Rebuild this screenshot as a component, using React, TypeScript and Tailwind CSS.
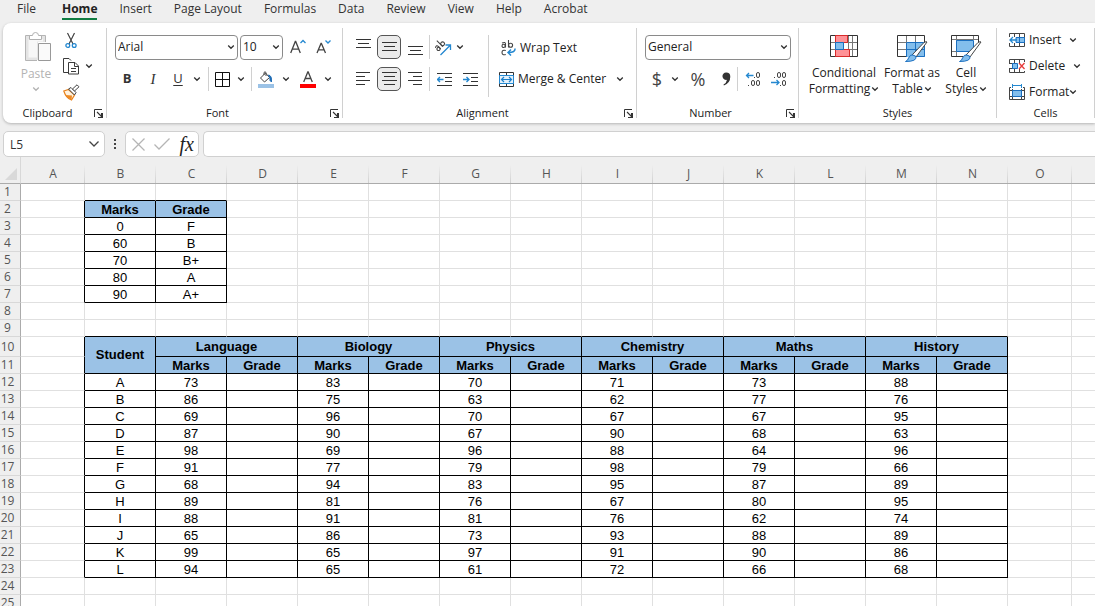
import React from "react";

const UI = "font-['Open_Sans','Noto_Sans',sans-serif]";

/* ---------- data ---------- */

const tabs = ["File", "Home", "Insert", "Page Layout", "Formulas", "Data", "Review", "View", "Help", "Acrobat"];

const letters = ["A", "B", "C", "D", "E", "F", "G", "H", "I", "J", "K", "L", "M", "N", "O"];

const gradeScale: [string, string][] = [
  ["0", "F"],
  ["60", "B"],
  ["70", "B+"],
  ["80", "A"],
  ["90", "A+"],
];

const subjects = ["Language", "Biology", "Physics", "Chemistry", "Maths", "History"];

const students: [string, number[]][] = [
  ["A", [73, 83, 70, 71, 73, 88]],
  ["B", [86, 75, 63, 62, 77, 76]],
  ["C", [69, 96, 70, 67, 67, 95]],
  ["D", [87, 90, 67, 90, 68, 63]],
  ["E", [98, 69, 96, 88, 64, 96]],
  ["F", [91, 77, 79, 98, 79, 66]],
  ["G", [68, 94, 83, 95, 87, 89]],
  ["H", [89, 81, 76, 67, 80, 95]],
  ["I", [88, 91, 81, 76, 62, 74]],
  ["J", [65, 86, 73, 93, 88, 89]],
  ["K", [99, 65, 97, 91, 90, 86]],
  ["L", [94, 65, 61, 72, 66, 68]],
];

/* ---------- icons ---------- */

function Chevron({ className = "text-[#333]" }: { className?: string }) {
  return (
    <svg width="8" height="6" viewBox="0 0 8 6" className={`shrink-0 ${className}`} aria-hidden="true">
      <path d="M1.200 1.500 4 4.300l2.800-2.800" fill="none" stroke="currentColor" strokeWidth="1.300" />
    </svg>
  );
}

function PasteIcon() {
  return (
    <svg width="28" height="31" viewBox="0 0 28 31" fill="none" aria-hidden="true">
      <path d="M7 4.500H1.500v25H13" stroke="#b4b4b4" />
      <path d="M2 5h19v6h-7v18H2z" fill="#e4e4e4" />
      <path d="M4.500 8v18.500H13V10.500h6V8z" fill="#f7f7f7" />
      <path d="M15 4.500h6.500V11" stroke="#b4b4b4" />
      <path d="M5.500 8.500v-4h3a3 3 0 0 1 6 0h3v4z" fill="#fff" stroke="#b0b0b0" />
      <path d="M14.500 12.500h12v17h-12z" fill="#fafafa" stroke="#999" />
    </svg>
  );
}

function CutIcon() {
  return (
    <svg width="12" height="17" viewBox="0 0 12 17" fill="none" aria-hidden="true">
      <path d="M2.500 1 8 12M9.500 1 4 12" stroke="#444" strokeWidth="1.200" />
      <circle cx="2.800" cy="13.500" r="1.900" stroke="#2488d0" strokeWidth="1.300" />
      <circle cx="9.200" cy="13.500" r="1.900" stroke="#2488d0" strokeWidth="1.300" />
    </svg>
  );
}

function CopyIcon() {
  return (
    <svg width="17" height="17" viewBox="0 0 17 17" fill="none" stroke="#3b3b3b" aria-hidden="true">
      <path d="M5 14.500H.500V.500h5.500l2 2" />
      <path d="M5.500 4.500h6.500l3.500 3.500v8h-10z" fill="#fff" />
      <path d="M11.500 4.500v4h4M8 10.500h5M8 13.500h5" />
    </svg>
  );
}

function PainterIcon() {
  return (
    <svg width="17" height="17" viewBox="0 0 17 17" fill="none" aria-hidden="true">
      <path d="M.800 7 5.500 5.500l6 5.500-3 5Q3 14 .800 7z" fill="#fff3e0" stroke="#e8811a" strokeWidth="1.200" />
      <path d="M2.500 11 9 11.500 8.500 16Q5 15 2.500 11z" fill="#ed8a25" />
      <path d="m5.500 5 2.500-1.500 5 5-1.500 2.500z" fill="#fff" stroke="#444" />
      <path d="m9.500 5 4.500-4.200L16 2.800 11.500 7z" fill="#fff" stroke="#444" />
    </svg>
  );
}

function LauncherIcon() {
  return (
    <svg width="9" height="9" viewBox="0 0 9 9" fill="none" stroke="#333" aria-hidden="true">
      <path d="M8 .500H.500V8" />
      <path d="m3 3 4.500 4.500M7.500 4v4M4 8.500h4.500V4" strokeWidth="1.100" />
    </svg>
  );
}

function GrowFontIcon({ shrink = false }: { shrink?: boolean }) {
  return (
    <svg width="16" height="16" viewBox="0 0 16 16" fill="none" aria-hidden="true">
      <path
        d={shrink ? "M1 14 5 4.500h.400L9.500 14M2.500 10.800h5.600" : "M.700 14 5.300 2.500h.400L10.300 14M2.300 10.200h6.500"}
        stroke="#444"
        strokeWidth="1.300"
      />
      <path d={shrink ? "m9.500 1.500 2.500 2.500 2.500-2.500" : "m10.500 4 2.500-2.500L15.500 4"} stroke="#2488d0" strokeWidth="1.300" />
    </svg>
  );
}

function BordersIcon() {
  return (
    <svg width="15" height="15" viewBox="0 0 15 15" fill="none" stroke="#111" aria-hidden="true">
      <path d="M.500.500h14v14H.500zM7.500 0v15M0 7.500h15" />
    </svg>
  );
}

function FillIcon() {
  return (
    <svg width="16" height="17" viewBox="0 0 16 17" fill="none" aria-hidden="true">
      <path d="m2.500 7 5-5 4 4.500-5 4.500z" fill="#fff" stroke="#444" />
      <path d="M6 4V1.500q1-1.500 2 0V5" stroke="#444" />
      <path d="M10.500 4q3.500.500 3 7L12 9.500Q12.500 7 10.500 4z" fill="#1f6cb5" stroke="#1f6cb5" />
      <path d="M0 13h16v4H0z" fill="#9bc2e6" />
    </svg>
  );
}

function FontColorIcon() {
  return (
    <svg width="16" height="17" viewBox="0 0 16 17" fill="none" aria-hidden="true">
      <path d="M3.700 11 7.800 1h.400L12.300 11M5.300 7.500h5.500" stroke="#444" strokeWidth="1.300" />
      <path d="M0 13h16v4H0z" fill="#f00" />
    </svg>
  );
}

const lineSets = {
  top: "M0 .500h15M2 4.500h11M0 8.500h15",
  middle: "M0 3.500h15M2 7.500h11M0 11.500h15",
  bottom: "M0 7.500h15M2 11.500h11M0 15.500h15",
  left: "M0 1.500h14M0 5.500h9M0 9.500h14M0 13.500h9",
  center: "M0 1.500h15M2 5.500h11M0 9.500h15M2 13.500h11",
  right: "M0 1.500h14M5 5.500h9M0 9.500h14M5 13.500h9",
};

function LinesIcon({ kind }: { kind: keyof typeof lineSets }) {
  return (
    <svg width="15" height="16" viewBox="0 0 15 16" fill="none" stroke="#333" aria-hidden="true">
      <path d={lineSets[kind]} />
    </svg>
  );
}

function OrientationIcon() {
  return (
    <svg width="17" height="17" viewBox="0 0 17 17" fill="none" aria-hidden="true">
      <g transform="rotate(-45 5 7)" stroke="#444" strokeWidth="1.100">
        <path d="M.500 5q3-1.500 3 1v3.500" />
        <circle cx="1.900" cy="8" r="1.600" />
        <path d="M6.500 1v8.500" />
        <circle cx="8.400" cy="7.300" r="1.900" />
      </g>
      <path d="M5.500 16 15 6.500M10.500 6H15.500V11" stroke="#2488d0" strokeWidth="1.300" />
    </svg>
  );
}

function IndentIcon({ increase = false }: { increase?: boolean }) {
  return (
    <svg width="15" height="15" viewBox="0 0 15 15" fill="none" aria-hidden="true">
      <path d="M0 1.500h15M8 5.500h7M8 9.500h7M0 13.500h15" stroke="#333" />
      <path d={increase ? "M0 7.500h6M3.500 5 6 7.500 3.500 10" : "M6.500 7.500h-6M3 5 .500 7.500 3 10"} stroke="#2488d0" strokeWidth="1.400" />
    </svg>
  );
}

function WrapIcon() {
  return (
    <svg width="15" height="16" viewBox="0 0 15 16" fill="none" aria-hidden="true">
      <g stroke="#444" strokeWidth="1.100">
        <path d="M1 3q3.500-1.500 3.500 1v3.500" />
        <circle cx="2.600" cy="5.900" r="1.600" />
        <path d="M7.500 0v7.500" />
        <circle cx="9.600" cy="5.200" r="2" />
        <path d="M4.800 10.500q-3.800-1-3.800 2t3.800 2" />
      </g>
      <path d="M14 8.500q.500 4-6.500 4M10 9.500l-3 3 3 3" stroke="#2488d0" strokeWidth="1.500" />
    </svg>
  );
}

function MergeIcon() {
  return (
    <svg width="15" height="15" viewBox="0 0 15 15" fill="none" aria-hidden="true">
      <path d="M.500.500h14v14H.500zM7.500 0v3M7.500 12v3" stroke="#333" />
      <path d="M.500 3.500h14v8H.500z" fill="#e4f1fb" stroke="#2488d0" />
      <path d="M2.500 7.500h10M5 5 2.500 7.500 5 10M10 5l2.500 2.500L10 10" stroke="#1b7fca" strokeWidth="1.200" />
    </svg>
  );
}

function DecimalIcon({ decrease = false }: { decrease?: boolean }) {
  return (
    <svg width="17" height="17" viewBox="0 0 17 17" fill="none" aria-hidden="true">
      {decrease ? (
        <g stroke="#444">
          <rect x="6.500" y="1.500" width="3" height="5" rx="1.500" />
          <rect x="11.500" y="1.500" width="3" height="5" rx="1.500" />
          <rect x="11.500" y="9.500" width="3" height="5" rx="1.500" />
          <path d="M3.500 6v1M9.500 14v1" />
        </g>
      ) : (
        <g stroke="#444">
          <rect x="11.500" y="1.500" width="3" height="5" rx="1.500" />
          <rect x="6.500" y="9.500" width="3" height="5" rx="1.500" />
          <rect x="11.500" y="9.500" width="3" height="5" rx="1.500" />
          <path d="M9.500 6v1M3.500 14v1" />
        </g>
      )}
      <path
        d={decrease ? "M0 11.500h8M5.500 9 8 11.500 5.500 14" : "M8.500 4.500h-7M4 2 1.500 4.500 4 7"}
        stroke="#2488d0"
        strokeWidth="1.300"
      />
    </svg>
  );
}

function ConditionalIcon() {
  return (
    <svg width="28" height="22" viewBox="0 0 28 22" fill="none" aria-hidden="true">
      <path d="M0 7.500h28M0 14.500h28M5.500 0v22M18.500 0v22M22.500 0v22" stroke="#777" />
      <path d="M.500.500h27v21H.500z" stroke="#333" />
      <path d="M5.500.500h12v7h-12zM5.500 14.500h14v7h-14z" fill="#ff9297" stroke="#d92b2b" />
      <path d="M5.500 7.500h8v7h-8z" fill="#83beec" stroke="#1b6fc0" />
    </svg>
  );
}

function Brush() {
  return (
    <>
      <path d="m30 7-11 15-4-2L27 7.500q3-1.500 3-.500z" fill="#fff" stroke="#444" />
      <path d="M19 21.500q1 5-10.500 5 2.500-1 3-3.500 2-4 4.500-3z" fill="#83beec" stroke="#1b6fc0" />
    </>
  );
}

function FormatTableIcon() {
  return (
    <svg width="31" height="28" viewBox="0 0 31 28" fill="none" aria-hidden="true">
      <path d="M10 8h18v14H10z" fill="#83beec" />
      <path d="M0 7.500h28M0 14.500h10M9.500 0v22M18.500 0v8" stroke="#777" />
      <path d="M10 21.500H.500V.500h27V8" stroke="#333" />
      <path d="M9.500 7.500h18v14h-8M9.500 14.500h18M18.500 8v14M9.500 8v14" stroke="#1b6fc0" />
      <Brush />
    </svg>
  );
}

function CellStylesIcon() {
  return (
    <svg width="31" height="28" viewBox="0 0 31 28" fill="none" aria-hidden="true">
      <path d="M0 4.500h28M0 16.500h6M5.500 0v22M22.500 0v5" stroke="#777" />
      <path d="M12 21.500H.500V.500h27V8" stroke="#333" />
      <path d="M5.500 5.500h17v11h-17z" fill="#83beec" stroke="#1b6fc0" />
      <Brush />
    </svg>
  );
}

function InsertCellsIcon() {
  return (
    <svg width="16" height="14" viewBox="0 0 16 14" fill="none" aria-hidden="true">
      <path d="M.500 4V.500h15v13H.500V10M5.500 0v4M10.500 0v4M5.500 10v4M10.500 10v4" stroke="#444" />
      <path d="M7 4.500h8.500v5H7z" fill="#83beec" stroke="#1b6fc0" />
      <path d="M10.500 4v6" stroke="#1b6fc0" />
      <path d="M8 7H1M4 4 1 7l3 3" stroke="#2488d0" strokeWidth="1.300" />
    </svg>
  );
}

function DeleteCellsIcon() {
  return (
    <svg width="16" height="14" viewBox="0 0 16 14" fill="none" aria-hidden="true">
      <path d="M.500 4V.500h15V3M.500 10v3.500h15V12M5.500 0v4M10.500 0v4M5.500 10v4M10.500 10v4M0 4.500h4M0 9.500h4" stroke="#444" />
      <path d="M3.500 4.500h5v5h-5z" fill="#83beec" stroke="#1b6fc0" />
      <path d="m10 4 5.500 6M15.500 4 10 10" stroke="#e83b3b" strokeWidth="1.300" />
    </svg>
  );
}

function FormatCellsIcon() {
  return (
    <svg width="16" height="17" viewBox="0 0 16 17" fill="none" aria-hidden="true">
      <path d="M3.500 0v4M12.500 0v4M3.500 1.500h9" stroke="#2488d0" />
      <path d="M2 3.500H.500v12h15v-12H14M3.500 5v11M12.500 5v11M0 6.500h16M0 12.500h16" stroke="#444" />
      <path d="M3.500 6.500h9v6h-9z" fill="#83beec" stroke="#1b6fc0" />
    </svg>
  );
}

/* ---------- ribbon parts ---------- */

type ButtonProps = { label: string; width?: string; active?: boolean; children: React.ReactNode };

function Tool({ label, width = "w-6", active = false, children }: ButtonProps) {
  return (
    <button
      type="button"
      aria-label={label}
      className={`flex h-6 shrink-0 items-center justify-center rounded-[5px] ${width} ${
        active ? "border border-[#555] bg-[#ebebeb]" : ""
      }`}
    >
      {children}
    </button>
  );
}

function Drop({ label, width = "w-4" }: { label: string; width?: string }) {
  return (
    <Tool label={label} width={width}>
      <Chevron />
    </Tool>
  );
}

function Divider({ height = "h-6" }: { height?: string }) {
  return <span className={`w-px shrink-0 bg-[#d0d0d0] ${height}`} />;
}

function Picker({ label, value, width }: { label: string; value: string; width: string }) {
  return (
    <label className={`relative flex h-[25px] shrink-0 items-center ${width}`}>
      <select
        aria-label={label}
        defaultValue={value}
        className="h-full w-full appearance-none rounded-[4px] border border-[#8a8a8a] bg-white pl-[2px] text-xs text-[#222]"
      >
        <option>{value}</option>
      </select>
      <span className="pointer-events-none absolute right-[3px]">
        <Chevron />
      </span>
    </label>
  );
}

type GroupProps = { name: string; width: string; launcher?: boolean; children: React.ReactNode };

function Group({ name, width, launcher = true, children }: GroupProps) {
  return (
    <section aria-label={name} className={`flex h-full shrink-0 items-center ${width}`}>
      <div className="flex h-full min-w-0 flex-1 flex-col justify-between pb-[2px]">
        {children}
        <div className="flex items-center">
          <span className="flex-1 text-center text-[11px] leading-4">{name}</span>
          {launcher && (
            <button type="button" aria-label={`${name} settings`} className="mr-[2px] flex w-3 shrink-0 justify-center">
              <LauncherIcon />
            </button>
          )}
        </div>
      </div>
      <Divider height="h-[90px]" />
    </section>
  );
}

function BigButton({ lines, width, children }: { lines: [string, string]; width: string; children: React.ReactNode }) {
  return (
    <button type="button" className={`flex shrink-0 flex-col items-center text-xs leading-4 ${width}`}>
      <span className="flex h-[30px] items-start">{children}</span>
      <span>{lines[0]}</span>
      <span className="flex items-center gap-px">
        {lines[1]}
        <Chevron />
      </span>
    </button>
  );
}

function CellsButton({ label, gap, children }: { label: string; gap: string; children: React.ReactNode }) {
  return (
    <button type="button" className={`flex h-[18px] items-center text-xs leading-4 ${gap}`}>
      <span className="flex items-center gap-1">
        {children}
        {label}
      </span>
      <Chevron />
    </button>
  );
}

function Ribbon() {
  return (
    <div className="ml-[3px] flex h-[100px] shrink-0 overflow-hidden rounded-l-lg bg-white shadow-[0_1px_3px_rgba(0,0,0,0.25)]">
      <Group name="Clipboard" width="w-[104px]">
        <div className="flex pt-2 pl-2">
          <button type="button" className="flex w-[50px] flex-col items-center text-xs leading-4 text-[#b3b3b3]">
            <span className="pl-1">
              <PasteIcon />
            </span>
            <span className="pt-1">Paste</span>
            <Chevron className="mt-1 text-[#b3b3b3]" />
          </button>
          <div className="flex flex-col gap-2">
            <button type="button" aria-label="Cut" className="flex h-[18px] w-5 items-center justify-center">
              <CutIcon />
            </button>
            <div className="flex">
              <button type="button" aria-label="Copy" className="flex h-[18px] w-5 items-center justify-center">
                <CopyIcon />
              </button>
              <button type="button" aria-label="Copy options" className="flex h-[18px] w-4 items-center justify-center">
                <Chevron />
              </button>
            </div>
            <button type="button" aria-label="Format painter" className="flex h-[18px] w-5 items-center justify-center">
              <PainterIcon />
            </button>
          </div>
        </div>
      </Group>

      <Group name="Font" width="w-[236px]">
        <div className="flex flex-col gap-2 pt-3 pl-2">
          <div className="flex h-6 items-center">
            <Picker label="Font" value="Arial" width="w-[123px]" />
            <span className="w-[2px]" />
            <Picker label="Font size" value="10" width="w-[43px]" />
            <span className="w-[2px]" />
            <Tool label="Increase font size" width="w-[26px]">
              <GrowFontIcon />
            </Tool>
            <Tool label="Decrease font size" width="w-[26px]">
              <GrowFontIcon shrink />
            </Tool>
          </div>
          <div className="flex h-6 items-center text-[13px] text-[#333]">
            <Tool label="Bold">
              <b>B</b>
            </Tool>
            <Tool label="Italic" width="w-7">
              <i className="font-['Liberation_Serif',serif] text-[15px]">I</i>
            </Tool>
            <Tool label="Underline" width="w-[22px]">
              <span className="underline underline-offset-2">U</span>
            </Tool>
            <Drop label="Underline options" />
            <span className="w-[3px]" />
            <Divider />
            <Tool label="Borders" width="w-[26px]">
              <BordersIcon />
            </Tool>
            <Drop label="Border options" width="w-3" />
            <span className="w-1" />
            <Divider />
            <Tool label="Fill color" width="w-7">
              <FillIcon />
            </Tool>
            <Drop label="Fill color options" width="w-3" />
            <Tool label="Font color" width="w-8">
              <FontColorIcon />
            </Tool>
            <Drop label="Font color options" width="w-2" />
          </div>
        </div>
      </Group>

      <Group name="Alignment" width="w-[294px]">
        <div className="flex pt-3 pl-2">
          <div className="flex w-[137px] flex-col gap-2">
            <div className="flex h-6 items-center gap-[2px]">
              <Tool label="Top align">
                <LinesIcon kind="top" />
              </Tool>
              <Tool label="Middle align" active>
                <LinesIcon kind="middle" />
              </Tool>
              <Tool label="Bottom align">
                <LinesIcon kind="bottom" />
              </Tool>
              <Divider />
              <Tool label="Orientation" width="w-[22px]">
                <OrientationIcon />
              </Tool>
              <Drop label="Orientation options" width="w-2" />
            </div>
            <div className="flex h-6 items-center gap-[2px]">
              <Tool label="Align left">
                <LinesIcon kind="left" />
              </Tool>
              <Tool label="Center" active>
                <LinesIcon kind="center" />
              </Tool>
              <Tool label="Align right">
                <LinesIcon kind="right" />
              </Tool>
              <Divider />
              <Tool label="Decrease indent">
                <IndentIcon />
              </Tool>
              <Tool label="Increase indent">
                <IndentIcon increase />
              </Tool>
            </div>
          </div>
          <Divider height="h-[62px]" />
          <div className="flex flex-col gap-2 pl-[10px] text-xs">
            <button type="button" className="flex h-6 items-center gap-1 pt-[2px] pl-[2px]">
              <WrapIcon />
              Wrap Text
            </button>
            <div className="flex h-6 items-center gap-1">
              <button type="button" className="flex items-center gap-1">
                <MergeIcon />
                Merge &amp; Center
              </button>
              <Drop label="Merge options" width="w-5" />
            </div>
          </div>
        </div>
      </Group>

      <Group name="Number" width="w-[162px]">
        <div className="flex flex-col gap-2 pt-3 pl-2">
          <div className="flex h-6 items-center">
            <Picker label="Number format" value="General" width="w-[146px]" />
          </div>
          <div className="flex h-6 items-center text-lg text-[#444]">
            <Tool label="Currency">
              <span>$</span>
            </Tool>
            <Drop label="Currency options" width="w-3" />
            <Tool label="Percent" width="w-[34px]">
              <span>%</span>
            </Tool>
            <Tool label="Comma style" width="w-[22px]">
              <svg width="9" height="14" viewBox="0 0 9 14" aria-hidden="true">
                <path d="M4.200.500A3.700 3.700 0 1 0 5 7.800Q4.500 11 1.500 12.500l.400 1Q8.300 11 8.300 4.700 8.300.500 4.200.500z" fill="#333" />
              </svg>
            </Tool>
            <Divider />
            <Tool label="Increase decimal" width="w-[30px]">
              <DecimalIcon />
            </Tool>
            <Tool label="Decrease decimal" width="w-[22px]">
              <DecimalIcon decrease />
            </Tool>
          </div>
        </div>
      </Group>

      <Group name="Styles" width="w-[198px]" launcher={false}>
        <div className="flex pt-3 pl-2">
          <BigButton lines={["Conditional", "Formatting"]} width="w-[74px]">
            <ConditionalIcon />
          </BigButton>
          <BigButton lines={["Format as", "Table"]} width="w-[62px]">
            <FormatTableIcon />
          </BigButton>
          <BigButton lines={["Cell", "Styles"]} width="w-[46px]">
            <CellStylesIcon />
          </BigButton>
        </div>
      </Group>

      <Group name="Cells" width="w-[98px]" launcher={false}>
        <div className="flex flex-col items-start gap-2 pt-2 pl-3">
          <CellsButton label="Insert" gap="gap-2">
            <InsertCellsIcon />
          </CellsButton>
          <CellsButton label="Delete" gap="gap-2">
            <DeleteCellsIcon />
          </CellsButton>
          <CellsButton label="Format" gap="gap-0">
            <FormatCellsIcon />
          </CellsButton>
        </div>
      </Group>
    </div>
  );
}

function FormulaBar() {
  return (
    <div className="flex h-[26px] shrink-0 items-stretch pl-[3px]">
      <label className="relative flex w-[102px] items-center">
        <input
          aria-label="Name box"
          defaultValue="L5"
          className="h-full w-full rounded-[5px] border border-[#d0d0d0] bg-white pl-[6px] text-xs text-[#333]"
        />
        <svg width="12" height="8" viewBox="0 0 12 8" className="pointer-events-none absolute right-[5px]" aria-hidden="true">
          <path d="m1.500 1.500 4.500 4.500 4.500-4.500" fill="none" stroke="#444" strokeWidth="1.300" />
        </svg>
      </label>
      <span className="flex w-5 flex-col items-center justify-center gap-[2px]">
        <span className="size-[2px] bg-[#444]" />
        <span className="size-[2px] bg-[#444]" />
        <span className="size-[2px] bg-[#444]" />
      </span>
      <div className="flex w-[74px] items-center justify-between rounded-[5px] border border-[#d0d0d0] bg-white pr-1 pl-[6px]">
        <button type="button" aria-label="Cancel">
          <svg width="13" height="13" viewBox="0 0 13 13" fill="none" stroke="#b5b5b5" strokeWidth="1.300" aria-hidden="true">
            <path d="m.500.500 12 12M12.500.500l-12 12" />
          </svg>
        </button>
        <button type="button" aria-label="Enter">
          <svg width="16" height="12" viewBox="0 0 16 12" fill="none" stroke="#b5b5b5" strokeWidth="1.300" aria-hidden="true">
            <path d="m.500 6.500 4.500 4.500L15.500.500" />
          </svg>
        </button>
        <button
          type="button"
          aria-label="Insert function"
          className="font-['Liberation_Serif',serif] text-xl leading-5 text-[#222] italic"
        >
          fx
        </button>
      </div>
      <input
        aria-label="Formula"
        className="ml-1 min-w-0 flex-1 rounded-l-[5px] border border-r-0 border-[#d0d0d0] bg-white px-2 text-xs"
      />
    </div>
  );
}

/* ---------- sheet ---------- */

const edge = "border-r border-b px-0 py-0 text-center";
const plain = `${edge} border-[#e0e0e0] last:border-r-0`;
const inked = "border-r border-b border-black px-0 pt-[2px] pb-0 text-center leading-[14px]";
const filled = `${inked} bg-[#9bc2e6] font-bold`;
const heading = `${edge} border-black bg-[#9bc2e6] font-bold`;
const leftOfBox = `${edge} border-r-black border-b-[#e0e0e0]`;
const aboveBox = `${edge} border-r-[#e0e0e0] border-b-black`;

function Blanks({ count, className = plain }: { count: number; className?: string }) {
  return (
    <>
      {Array.from({ length: count }, (_, i) => (
        <td key={i} className={className} />
      ))}
    </>
  );
}

function Row({ n, tall = false, children }: { n: number; tall?: boolean; children: React.ReactNode }) {
  return (
    <tr className={tall ? "h-5" : "h-[17px]"}>
      <th
        scope="row"
        className={`border-r border-b border-r-[#ababab] border-b-[#d8d8d8] bg-[#efefef] p-0 pr-[5px] text-center text-xs leading-4 font-normal text-[#555] ${UI}`}
      >
        {n}
      </th>
      {children}
    </tr>
  );
}

function Sheet() {
  return (
    <div className="min-h-0 flex-1 overflow-hidden">
      <table className="w-full table-fixed border-separate border-spacing-0 bg-white font-['Liberation_Sans',Arial,sans-serif] text-[13px] leading-4 text-black">
        <colgroup>
          <col className="w-[21px]" />
          <col className="w-16" />
          {letters.slice(1, 14).map((l) => (
            <col key={l} className="w-[71px]" />
          ))}
          <col className="w-16" />
          <col />
        </colgroup>
        <thead>
          <tr className={`h-[27px] bg-[#efefef] text-xs text-[#555] ${UI}`}>
            <th className="border-r border-b border-r-[#d8d8d8] border-b-[#ababab] p-0" aria-label="Select all">
              <svg width="12" height="12" viewBox="0 0 12 12" className="mt-2 ml-[5px]" aria-hidden="true">
                <path d="M12 0v12H0z" fill="#d9d9d9" />
              </svg>
            </th>
            {letters.map((l) => (
              <th
                key={l}
                scope="col"
                className="border-b border-[#ababab] bg-linear-to-b from-transparent from-30% to-[#d0d0d0] bg-[length:1px_100%] bg-right bg-no-repeat p-0 pt-2 font-normal"
              >
                {l}
              </th>
            ))}
            <th className="border-b border-[#ababab] p-0" />
          </tr>
        </thead>
        <tbody>
          <Row n={1}>
            <Blanks count={1} />
            <Blanks count={2} className={aboveBox} />
            <Blanks count={13} />
          </Row>
          <Row n={2}>
            <Blanks count={1} className={leftOfBox} />
            <th className={filled}>Marks</th>
            <th className={filled}>Grade</th>
            <Blanks count={13} />
          </Row>
          {gradeScale.map(([mark, grade], i) => (
            <Row key={mark} n={i + 3}>
              <Blanks count={1} className={leftOfBox} />
              <td className={inked}>{mark}</td>
              <td className={inked}>{grade}</td>
              <Blanks count={13} />
            </Row>
          ))}
          <Row n={8}>
            <Blanks count={16} />
          </Row>
          <Row n={9}>
            <Blanks count={1} />
            <Blanks count={13} className={aboveBox} />
            <Blanks count={2} />
          </Row>
          <Row n={10} tall>
            <Blanks count={1} className={leftOfBox} />
            <th rowSpan={2} className={heading}>
              Student
            </th>
            {subjects.map((s) => (
              <th key={s} colSpan={2} className={heading}>
                {s}
              </th>
            ))}
            <Blanks count={2} />
          </Row>
          <Row n={11}>
            <Blanks count={1} className={leftOfBox} />
            {subjects.map((s) => (
              <React.Fragment key={s}>
                <th className={filled}>Marks</th>
                <th className={filled}>Grade</th>
              </React.Fragment>
            ))}
            <Blanks count={2} />
          </Row>
          {students.map(([name, marks], i) => (
            <Row key={name} n={i + 12}>
              <Blanks count={1} className={leftOfBox} />
              <td className={inked}>{name}</td>
              {marks.map((m, j) => (
                <React.Fragment key={subjects[j]}>
                  <td className={inked}>{m}</td>
                  <td className={inked} />
                </React.Fragment>
              ))}
              <Blanks count={2} />
            </Row>
          ))}
          <Row n={24}>
            <Blanks count={16} />
          </Row>
          <Row n={25}>
            <Blanks count={16} />
          </Row>
        </tbody>
      </table>
    </div>
  );
}

export default function App() {
  return (
    <div className={`flex h-screen flex-col overflow-hidden bg-[#efefef] text-[#222] ${UI}`}>
      <nav aria-label="Ribbon tabs" className="flex h-[23px] shrink-0 items-start gap-[22px] pl-[17px] text-xs text-[#333]">
        {tabs.map((t) => (
          <button
            key={t}
            type="button"
            className={`h-[20px] shrink-0 border-b-2 leading-[18px] ${
              t === "Home" ? "border-[#107c41] font-bold text-[#222]" : "border-transparent"
            } ${t === "File" ? "mr-1" : ""}`}
          >
            {t}
          </button>
        ))}
      </nav>
      <Ribbon />
      <div className="h-2 shrink-0" />
      <FormulaBar />
      <Sheet />
    </div>
  );
}
